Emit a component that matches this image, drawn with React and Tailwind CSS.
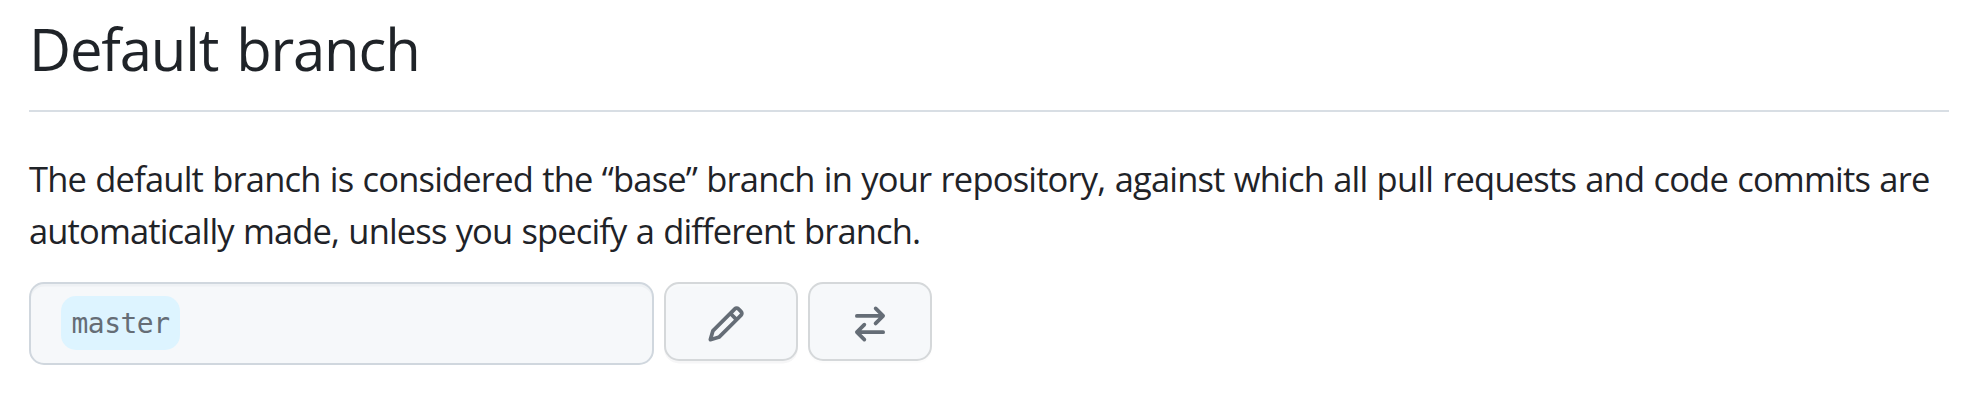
function PencilIcon() {
  return (
    <svg viewBox="0 0 16 16" className="size-10 fill-[#656d76]" aria-hidden="true">
      <path d="M11.013 1.427a1.75 1.75 0 012.474 0l1.086 1.086a1.75 1.75 0 010 2.474l-8.61 8.61c-.21.21-.47.364-.756.445l-3.251.93a.75.75 0 01-.927-.928l.929-3.25a1.75 1.75 0 01.445-.758l8.61-8.61zm1.414 1.06a.25.25 0 00-.354 0L10.811 3.75l1.439 1.44 1.263-1.263a.25.25 0 000-.354l-1.086-1.086zM11.189 6.25L9.75 4.81l-6.286 6.287a.25.25 0 00-.064.108l-.558 1.953 1.953-.558a.249.249 0 00.108-.064l6.286-6.286z" />
    </svg>
  );
}

function SwitchIcon() {
  return (
    <svg viewBox="0 0 16 16" className="size-10 fill-[#656d76]" aria-hidden="true">
      <path d="M5.22 14.78a.75.75 0 001.06-1.06L4.56 12h8.69a.75.75 0 000-1.5H4.56l1.72-1.72a.75.75 0 00-1.06-1.06l-3 3a.75.75 0 000 1.06l3 3zm5.56-6.5a.75.75 0 11-1.06-1.06l1.72-1.72H2.75a.75.75 0 010-1.5h8.69L9.72 2.28a.75.75 0 011.06-1.06l3 3a.75.75 0 010 1.06l-3 3z" />
    </svg>
  );
}

export default function App() {
  return (
    <main className="h-[414px] bg-white pl-[29px] pr-[23px] font-['Open_Sans','Noto_Sans',sans-serif] text-[#1f2328]">
      <h2 className="h-28 border-b-2 border-[#d8dee4] pt-1 text-[58px] leading-[90px] tracking-[-1.15px] [word-spacing:4px] whitespace-nowrap">
        Default branch
      </h2>
      <p className="mt-[41px] text-[34.5px] leading-[52px] tracking-[-0.82px] [word-spacing:1.1px] whitespace-nowrap">
        The default branch is considered the “base” branch in your repository, against which all pull requests and code commits are
        <br />
        <span className="tracking-[-0.86px]">automatically made, unless you specify a different branch.</span>
      </p>
      <div className="mt-[25px] flex items-start gap-2.5">
        <div className="flex h-[83px] w-[625px] items-start rounded-[15px] border-2 border-[#d0d7de] bg-[#f6f8fa] pt-3 pl-[30px] shadow-[inset_0_2.5px_0_rgba(208,215,222,0.2)]">
          <span className="flex h-[54px] w-[119px] items-center justify-center rounded-[15px] bg-[#ddf4ff] pt-0.5 font-['DejaVu_Sans_Mono',monospace] text-[28px] tracking-[-0.5px] text-[#656d76]">
            master
          </span>
        </div>
        <button className="flex h-[79px] w-[134px] items-start rounded-[15px] border-2 border-[#d5d8da] bg-[#f6f8fa] pt-5 pl-10 shadow-[0_2.5px_0_rgba(31,35,40,0.04),inset_0_2.5px_0_rgba(255,255,255,0.25)]" aria-label="Rename branch">
          <PencilIcon />
        </button>
        <button className="flex h-[79px] w-[124px] items-start rounded-[15px] border-2 border-[#d5d8da] bg-[#f6f8fa] pt-5 pl-10 shadow-[0_2.5px_0_rgba(31,35,40,0.01)]" aria-label="Switch to another branch">
          <SwitchIcon />
        </button>
      </div>
    </main>
  );
}
